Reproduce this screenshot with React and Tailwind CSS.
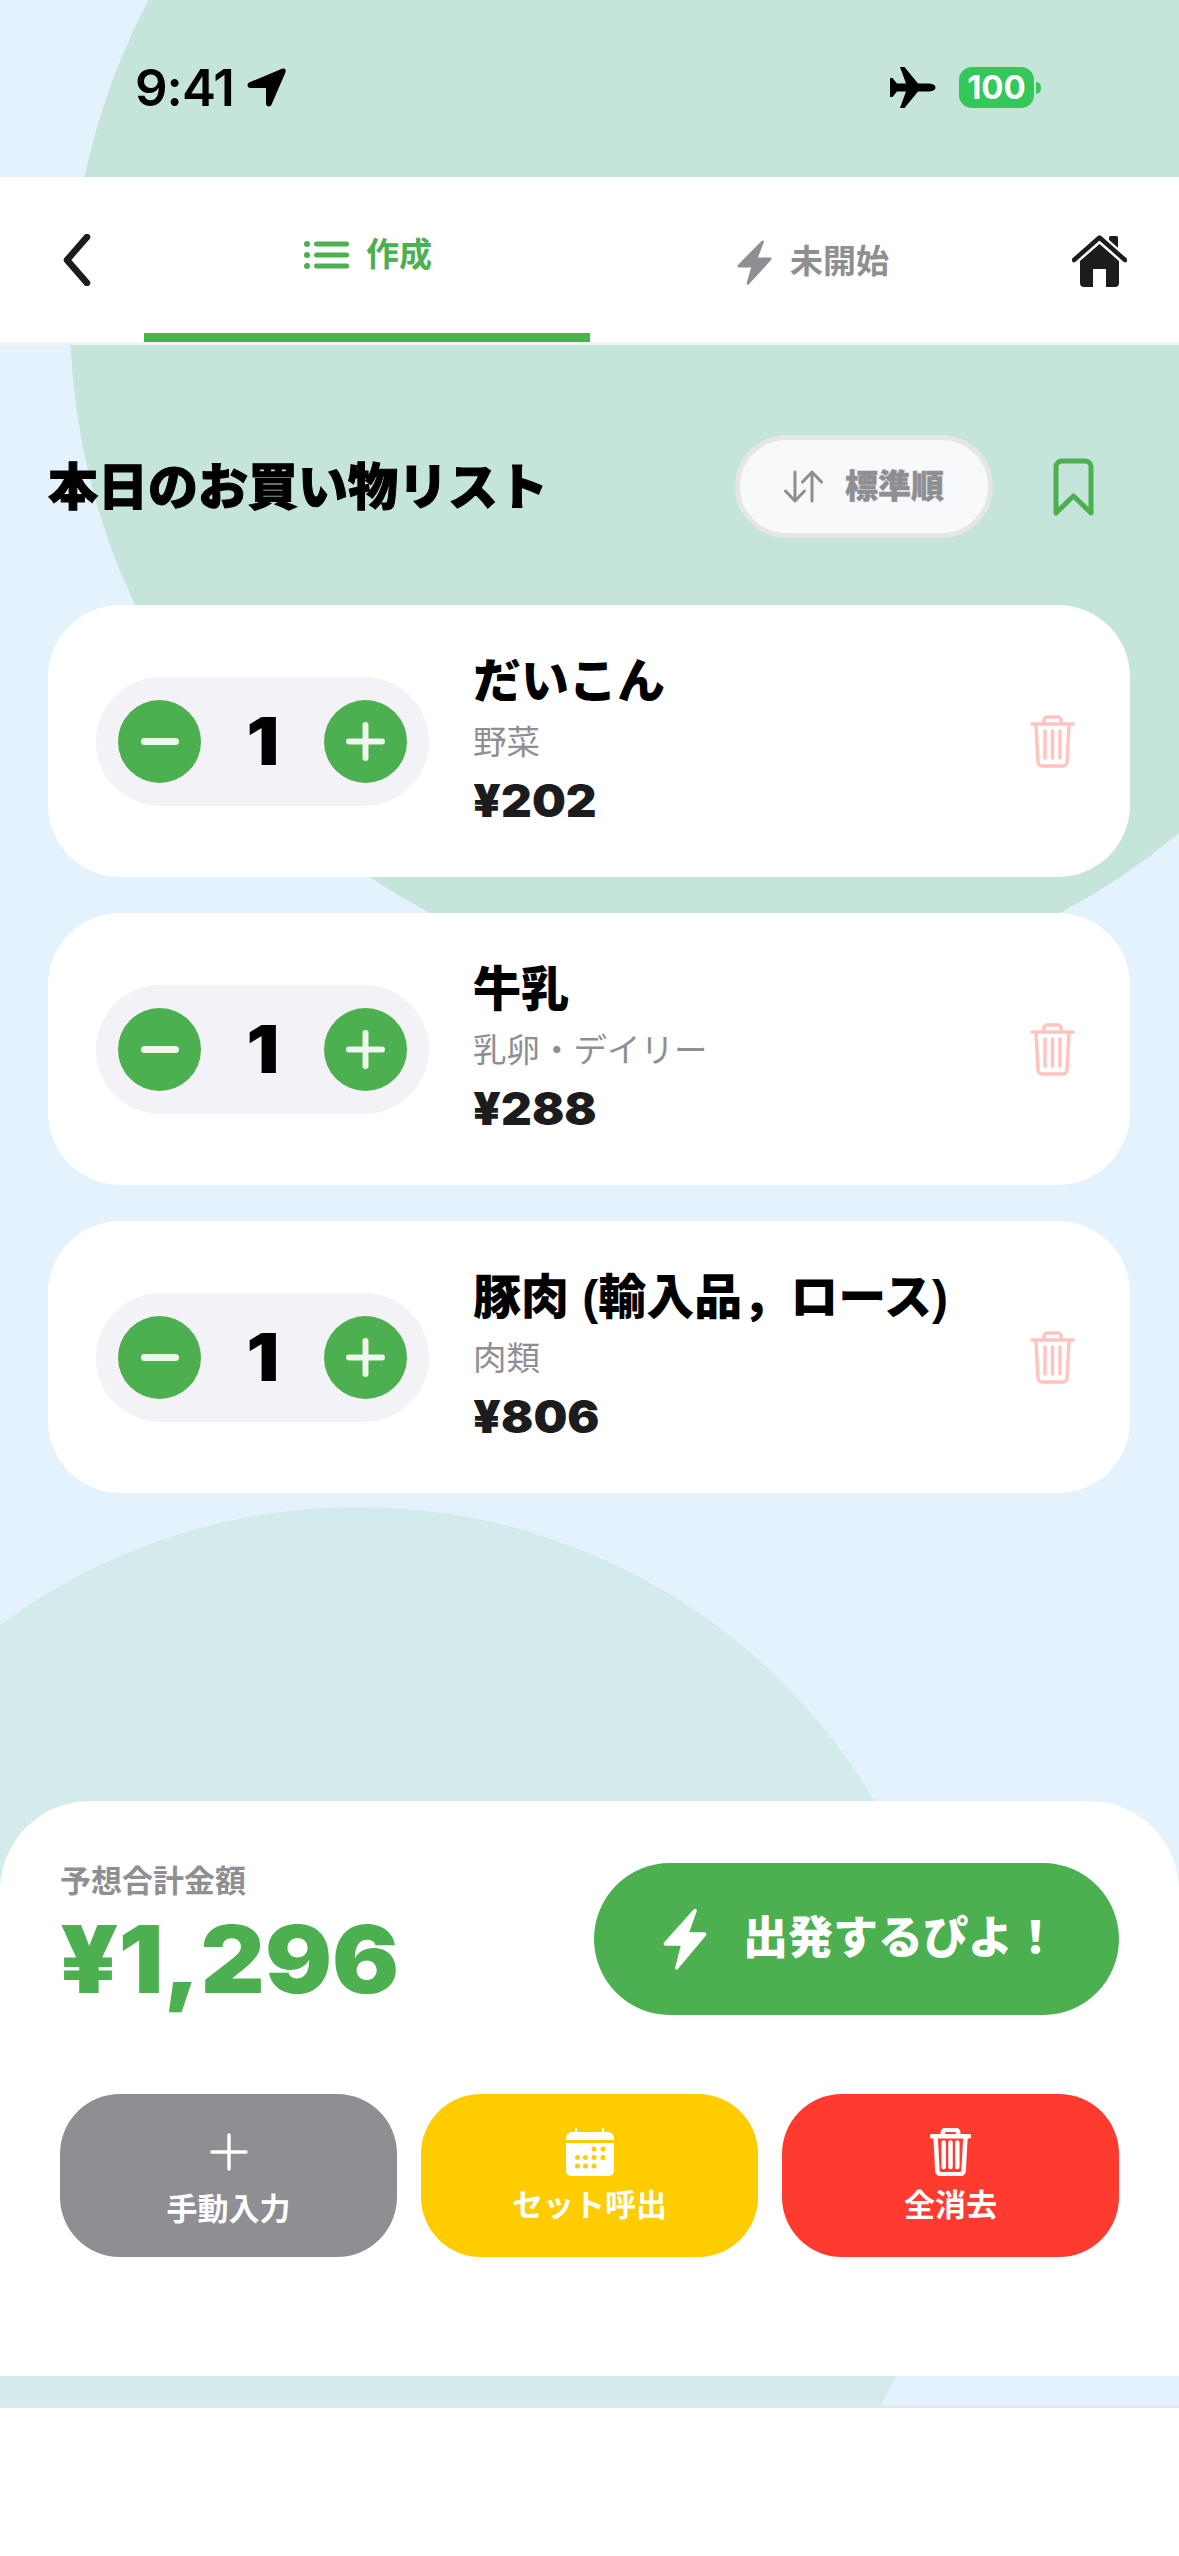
const GREEN = '#4CAF50';

const ITEMS = [
  { name: 'だいこん', category: '野菜', price: '¥202' },
  { name: '牛乳', category: '乳卵・デイリー', price: '¥288' },
  { name: '豚肉 (輸入品，ロース)', category: '肉類', price: '¥806' },
];

function LocationArrow() {
  return (
    <svg width="39" height="39" viewBox="0 0 39 39" fill="#000">
      <path d="M35 .8 2.8 14.2C-.8 15.8.2 20 3.4 20H19v15.6c0 3.2 4.2 4.2 5.6 1L38.4 4.4C39.6 1.6 37.6-.2 35 .8z" />
    </svg>
  );
}

function Airplane() {
  return (
    <svg width="46" height="41" viewBox="0 0 46 41" fill="#000">
      <path d="M45.5 20.5c0-2.6-3.5-4-8-4H28L14.5 0H10l6 16.5H7L2.5 11H0v19h2.5L7 24.5h9L10 41h4.5L28 24.5h9.5c4.5 0 8-1.4 8-4z" />
    </svg>
  );
}

function Bolt({ width, height, color }) {
  return (
    <svg width={width} height={height} viewBox="0 0 36 46" preserveAspectRatio="none" fill={color}>
      <path d="M25 1.2 1 25.5c-1 1-.4 2.5 1 2.5h12.5L10 44c-.4 1.6 1.2 2.4 2.2 1.2L35 20.500c1-1 .4-2.500-1-2.500H21.500L27.600 2.400C28 .8 26.200 0 25 1.200z" />
    </svg>
  );
}

function ListIcon() {
  return (
    <svg width="45" height="30" viewBox="0 0 45 30" fill={GREEN}>
      <circle cx="3" cy="4" r="3" />
      <circle cx="3" cy="15" r="3" />
      <circle cx="3" cy="26" r="3" />
      <rect x="10" y="1.5" width="35" height="5" rx="2.5" />
      <rect x="10" y="12.5" width="35" height="5" rx="2.5" />
      <rect x="10" y="23.5" width="35" height="5" rx="2.5" />
    </svg>
  );
}

function HomeIcon() {
  return (
    <svg width="55" height="54" viewBox="0 0 55 54" fill="#1C1C1E">
      <rect x="37" y="3" width="9" height="16" rx="1.500" />
      <path d="M2 27 27.500 4.500 53 27" fill="none" stroke="#fff" strokeWidth="9" />
      <path d="M2 27 27.500 4.500 53 27" fill="none" stroke="#1C1C1E" strokeWidth="4.500" strokeLinecap="round" strokeLinejoin="round" />
      <path d="M27.500 11 47 28v22a4 4 0 0 1-4 4h-9V36H21v18h-9a4 4 0 0 1-4-4V28z" />
    </svg>
  );
}

function SortIcon() {
  return (
    <svg width="39" height="33" viewBox="0 0 39 33" fill="none" stroke="#8E8E93" strokeWidth="3" strokeLinecap="round" strokeLinejoin="round">
      <path d="M11 2v29M1.500 21 11 31l9.500-10" />
      <path d="M28 31V2M18.500 12 28 2l9.500 10" />
    </svg>
  );
}

function Bookmark() {
  return (
    <svg width="41" height="58" viewBox="0 0 41 58" fill="none" stroke={GREEN} strokeWidth="5" strokeLinecap="round" strokeLinejoin="round">
      <path d="M3 55V9a6 6 0 0 1 6-6h23a6 6 0 0 1 6 6v46L20.500 38z" />
    </svg>
  );
}

function TrashIcon({ width, height, color, strokeWidth }) {
  return (
    <svg width={width} height={height} viewBox="0 0 45 53" fill="none" stroke={color} strokeWidth={strokeWidth} strokeLinecap="round" strokeLinejoin="round">
      <path d="M2 9h41" />
      <path d="M14 8V5a3 3 0 0 1 3-3h11a3 3 0 0 1 3 3v3" />
      <path d="M6 10l2 37a4 4 0 0 0 4 4h21a4 4 0 0 0 4-4l2-37" />
      <path d="M15 16v27M22.500 16v27M30 16v27" />
    </svg>
  );
}

function CalendarIcon() {
  return (
    <svg width="48" height="48" viewBox="0 0 48 48" fill="#fff">
      <rect x="9" y="0" width="2" height="6" />
      <rect x="36" y="0" width="2" height="6" />
      <path d="M0 12V10a6 6 0 0 1 6-6h36a6 6 0 0 1 6 6v2z" />
      <path d="M0 15h48v28a5 5 0 0 1-5 5H5a5 5 0 0 1-5-5z" />
      <g fill="#FFCC00">
        <circle cx="28" cy="21" r="2.500" />
        <circle cx="37" cy="21" r="2.500" />
        <circle cx="11.500" cy="29.500" r="2.500" />
        <circle cx="19.500" cy="29.500" r="2.500" />
        <circle cx="28" cy="29.500" r="2.500" />
        <circle cx="37" cy="29.500" r="2.500" />
        <circle cx="11.500" cy="38" r="2.500" />
        <circle cx="19.500" cy="38" r="2.500" />
        <circle cx="28" cy="38" r="2.500" />
      </g>
    </svg>
  );
}

function Stepper() {
  return (
    <div className="flex h-[129px] w-[333px] shrink-0 items-center justify-between rounded-full bg-[#F2F2F7] px-[22px]">
      <div className="flex h-[83px] w-[83px] items-center justify-center rounded-full bg-[#4CAF50]">
        <div className="h-[7px] w-[38px] rounded-full bg-white/90" />
      </div>
      <span className="origin-center scale-x-[1.1] font-['Inter',sans-serif] text-[66px] leading-none font-black text-black">1</span>
      <div className="flex h-[83px] w-[83px] items-center justify-center rounded-full bg-[#4CAF50]">
        <svg width="39" height="39" viewBox="0 0 39 39" fill="none" stroke="#fff" strokeOpacity="0.9" strokeWidth="6" strokeLinecap="round">
          <path d="M3 19.500h33M19.500 3v33" />
        </svg>
      </div>
    </div>
  );
}

function ItemCard({ name, category, price }) {
  return (
    <div className="flex h-[272px] items-center rounded-[72px] bg-white pr-[55px] pl-[48px]">
      <Stepper />
      <div className="ml-[44px] min-w-0 flex-1">
        <div className="text-[48px] leading-[56px] font-black whitespace-nowrap text-black">{name}</div>
        <div className="mt-[11px] text-[33.500px] leading-[44px] text-[#8E8E93]">{category}</div>
        <div className="mt-[9px] origin-left scale-x-[1.06] font-['Inter',sans-serif] text-[45px] leading-[54px] font-black text-[#1C1C1E]">{price}</div>
      </div>
      <TrashIcon width={45} height={53} color="#FFC4C0" strokeWidth={3.5} />
    </div>
  );
}

function ActionButton({ color, icon, label, labelClass }) {
  return (
    <div className={`flex h-[163px] flex-col items-center rounded-[60px] pt-[34px] ${color}`}>
      <div className="flex h-[48px] items-center justify-center">{icon}</div>
      <div className={`text-[31px] leading-[40px] font-bold text-white ${labelClass}`}>{label}</div>
    </div>
  );
}

export default function App() {
  return (
    <div className="relative flex h-[2556px] w-[1179px] flex-col overflow-hidden bg-white font-['Liberation_Sans','Noto_Sans_CJK_JP',sans-serif]">
      {/* background blobs, sit behind everything */}
      <div className="absolute top-0 left-0 h-[2406px] w-full overflow-hidden bg-[#E3F2FD]">
        <div className="absolute top-[-359px] left-[70px] h-[1350px] w-[1350px] rounded-full bg-[#C5E5DA]" />
        <div className="absolute top-[1507px] left-[-243px] h-[1202px] w-[1202px] rounded-full bg-[#D3EBEB]" />
      </div>

      <div className="relative flex h-[177px] shrink-0 items-start justify-between pt-[67px] pr-[138px] pl-[135px]">
        <div className="flex items-center gap-[13px]">
          <span className="font-['Inter',sans-serif] text-[51px] leading-[41px] font-semibold tracking-[-1px] text-black">9:41</span>
          <LocationArrow />
        </div>
        <div className="flex items-center gap-[23px]">
          <Airplane />
          <div className="flex items-center gap-[2px]">
            <div className="flex h-[41px] w-[75px] items-center justify-center rounded-[13px] bg-[#34C759] font-['Inter',sans-serif] text-[33px] font-bold text-white">100</div>
            <div className="h-[12px] w-[5px] rounded-r-full bg-[#34C759]" />
          </div>
        </div>
      </div>

      <div className="relative flex h-[168px] shrink-0 items-stretch border-b-[3px] border-[#F2F2F7] bg-white">
        <div className="flex w-[144px] items-center pl-[60px]">
          <svg width="34" height="52" viewBox="0 0 34 52" fill="none" stroke="#1C1C1E" strokeWidth="6.500" strokeLinecap="round" strokeLinejoin="round">
            <path d="M27 3 7 26l20 23" />
          </svg>
        </div>
        <div className="flex w-[446px] items-center justify-center gap-[17px] border-b-[9px] border-[#4CAF50] pl-[2px]">
          <ListIcon />
          <span className="text-[33px] font-bold text-[#4CAF50]">作成</span>
        </div>
        <div className="flex w-[446px] items-center justify-center gap-[18px] pt-[5px]">
          <Bolt width={35} height={45} color="#8E8E93" />
          <span className="text-[33px] font-bold text-[#8E8E93]">未開始</span>
        </div>
        <div className="flex flex-1 items-center pl-[36px]">
          <HomeIcon />
        </div>
      </div>

      <main className="relative flex flex-1 flex-col">
        <div className="flex h-[193px] items-start pt-[90px] pl-[48px]">
          <h1 className="mt-[23px] w-[687px] text-[50px] leading-[60px] font-black text-black [-webkit-text-stroke:1px_#000]">本日のお買い物リスト</h1>
          <div className="flex h-[103px] w-[258px] items-center justify-center gap-[22px] rounded-full border-[5px] border-[#E5E5EA] bg-[#F8F9FB]">
            <SortIcon />
            <span className="text-[33px] font-black text-[#8E8E93] [-webkit-text-stroke:0.5px_#8E8E93]">標準順</span>
          </div>
          <div className="mt-[23px] ml-[60px]">
            <Bookmark />
          </div>
        </div>

        <div className="mt-[67px] flex flex-col gap-[36px] pr-[49px] pl-[48px]">
          {ITEMS.map((item) => (
            <ItemCard key={item.name} {...item} />
          ))}
        </div>

        <div className="mt-auto mb-[30px] h-[575px] rounded-t-[90px] bg-white px-[60px] pt-[62px]">
          <div className="flex items-center justify-between">
            <div className="-mt-[5px]">
              <div className="text-[31px] leading-[36px] font-bold text-[#8E8E93]">予想合計金額</div>
              <div className="mt-[9px] origin-left scale-x-[1.07] font-['Inter',sans-serif] text-[93px] leading-[100px] font-black text-[#4CAF50]">¥1,296</div>
            </div>
            <div className="flex h-[152px] w-[525px] items-center justify-center gap-[36px] rounded-full bg-[#4CAF50] pl-[8px]">
              <Bolt width={44} height={62} color="#fff" />
              <span className="text-[45px] font-black text-white">出発するぴよ！</span>
            </div>
          </div>
          <div className="mt-[79px] grid grid-cols-3 gap-[24px]">
            <ActionButton
              color="bg-[#8E8E93]"
              label="手動入力"
              labelClass="mt-[14px]"
              icon={
                <svg width="38" height="38" viewBox="0 0 38 38" fill="none" stroke="#fff" strokeWidth="3.500" strokeLinecap="round">
                  <path d="M2 19h34M19 2v34" />
                </svg>
              }
            />
            <ActionButton color="bg-[#FFCC00]" label="セット呼出" labelClass="mt-[10px]" icon={<CalendarIcon />} />
            <ActionButton
              color="bg-[#FF3B30]"
              label="全消去"
              labelClass="mt-[10px]"
              icon={<TrashIcon width={41} height={48} color="#fff" strokeWidth={5} />}
            />
          </div>
        </div>
      </main>

      <div className="relative h-[150px] shrink-0 border-t-[2px] border-[#E5E5EA] bg-white" />
    </div>
  );
}
